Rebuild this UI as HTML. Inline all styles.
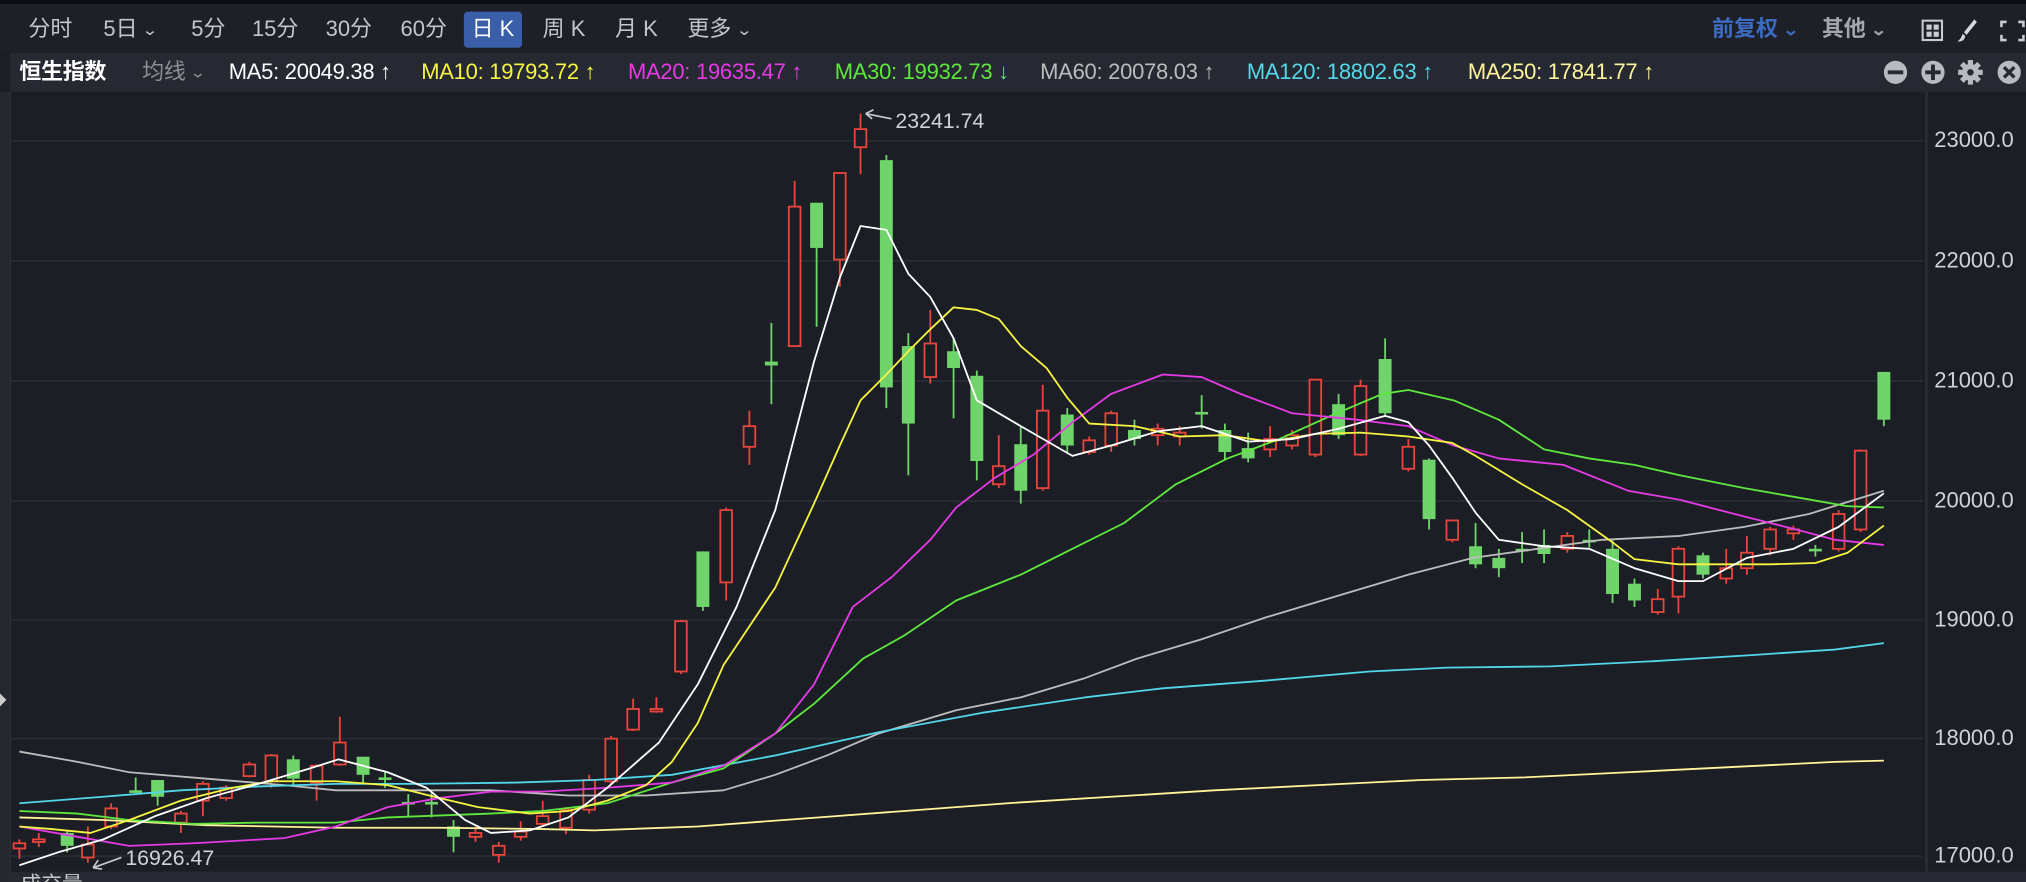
<!DOCTYPE html>
<html><head><meta charset="utf-8">
<style>
html,body{margin:0;padding:0;background:#1c1e26;width:2026px;height:882px;overflow:hidden;}
#w{position:absolute;left:0;top:0;width:1568px;height:683px;transform:scale(1.29209,1.29136);transform-origin:0 0;font-family:"Liberation Sans","Noto Sans CJK SC",sans-serif;background:#1c1e26;}
.top{position:absolute;left:0;top:0;width:1568px;height:41px;background:#1e2028;border-top:3px solid #0e0f12;box-sizing:border-box;}
.t{position:absolute;top:9px;font-size:17px;color:#c4c6cc;line-height:22px;}
.sel{background:#3a5ea8;color:#fff;border-radius:3px;padding:0 6px;top:6px;height:28px;line-height:28px;}
.ma{position:absolute;left:8px;top:41px;width:1560px;height:30px;background:#262932;}
.m{position:absolute;top:5px;font-size:17px;line-height:20px;white-space:nowrap;letter-spacing:-0.2px;}
.lab{position:absolute;left:1497px;font-size:17px;color:#d0d2d8;}
.ar{display:inline-block;font-size:12px;transform:scaleX(1.3);vertical-align:1px;}
</style></head><body>
<div id="w">
<div class="top">
<span class="t" style="left:22px">分时</span>
<span class="t" style="left:80px">5日 <span class="ar">⌄</span></span>
<span class="t" style="left:148px">5分</span>
<span class="t" style="left:195px">15分</span>
<span class="t" style="left:252px">30分</span>
<span class="t" style="left:310px">60分</span>
<span class="t sel" style="left:359px">日 K</span>
<span class="t" style="left:420px">周 K</span>
<span class="t" style="left:476px">月 K</span>
<span class="t" style="left:532px">更多 <span class="ar">⌄</span></span>
<span class="t" style="left:1325px;color:#3d6bc2;font-weight:bold">前复权 <span class="ar">⌄</span></span>
<span class="t" style="left:1410px;color:#a4a6ac;font-weight:bold">其他 <span class="ar">⌄</span></span>
<svg style="position:absolute;left:1486px;top:10px" width="82" height="22" viewBox="0 0 82 22">
<rect x="2" y="3" width="15" height="15" fill="none" stroke="#c9cbd0" stroke-width="1.6"/><rect x="5" y="6" width="4" height="4" fill="#c9cbd0"/><rect x="10.5" y="6" width="4" height="4" fill="#c9cbd0"/><rect x="5" y="11.5" width="4" height="4" fill="#c9cbd0"/><rect x="10.5" y="11.5" width="4" height="4" fill="#c9cbd0"/>
<path d="M42 2 L44 4 L36 14 L34 12 Z M33 13 L35 15 Q34 20 29 19 Q32 17 33 13Z" fill="#d8d8dc"/>
<path d="M62 3h5v2h-3v3h-2zM76 3h5v5h-2v-3h-3zM62 14h2v3h3v2h-5zM79 14h2v5h-5v-2h3z" fill="#c9cbd0"/>
</svg>
</div>
<div class="ma">
<span class="m" style="left:7px;color:#fff;font-weight:bold;font-size:17px">恒生指数</span>
<span class="m" style="left:102px;color:#8e9097">均线 <span class="ar">⌄</span></span>
<span class="m" style="left:169px;color:#fff">MA5: 20049.38 ↑</span>
<span class="m" style="left:318px;color:#f5f542">MA10: 19793.72 ↑</span>
<span class="m" style="left:478px;color:#e53ae5">MA20: 19635.47 ↑</span>
<span class="m" style="left:638px;color:#5ee83e">MA30: 19932.73 ↓</span>
<span class="m" style="left:797px;color:#bcbcbc">MA60: 20078.03 ↑</span>
<span class="m" style="left:957px;color:#56d8ea">MA120: 18802.63 ↑</span>
<span class="m" style="left:1128px;color:#fff59a">MA250: 17841.77 ↑</span>
<svg style="position:absolute;left:1448px;top:4px" width="112" height="22" viewBox="0 0 112 22">
<circle cx="11" cy="11" r="9" fill="#b8babf"/><rect x="5" y="9.5" width="12" height="3" fill="#262932"/>
<circle cx="40" cy="11" r="9" fill="#b8babf"/><rect x="34" y="9.5" width="12" height="3" fill="#262932"/><rect x="38.5" y="5" width="3" height="12" fill="#262932"/>
<g transform="translate(69,11)" fill="#b8babf"><circle r="6.5"/><rect x="-2" y="-9.5" width="4" height="19"/><rect x="-2" y="-9.5" width="4" height="19" transform="rotate(45)"/><rect x="-2" y="-9.5" width="4" height="19" transform="rotate(90)"/><rect x="-2" y="-9.5" width="4" height="19" transform="rotate(135)"/><circle r="2.5" fill="#262932"/></g>
<circle cx="99" cy="11" r="9" fill="#b8babf"/><path d="M95 7l8 8M103 7l-8 8" stroke="#262932" stroke-width="2.6"/>
</svg>
</div>
<svg id="ch" style="position:absolute;left:0;top:71px" width="1568" height="612" viewBox="0 71 1568 612">
<rect x="0" y="71" width="8" height="612" fill="#25272e"/>
<line x1="8" y1="71" x2="8" y2="683" stroke="#2e3038"/>
<line x1="1491" y1="71" x2="1491" y2="683" stroke="#2f323a" stroke-width="1.5"/>
<g stroke="#292c34" stroke-width="1.4">
<line x1="8" x2="1488" y1="109" y2="109"/><line x1="8" x2="1488" y1="202" y2="202"/><line x1="8" x2="1488" y1="295" y2="295"/><line x1="8" x2="1488" y1="388" y2="388"/><line x1="8" x2="1488" y1="480" y2="480"/><line x1="8" x2="1488" y1="572" y2="572"/><line x1="8" x2="1488" y1="663" y2="663"/>
</g>
<g id="cd"></g>
<g fill="none" stroke-width="1.4" stroke-linejoin="round">
<polyline stroke="#bdbdbd" points="15,582 60,590 100,598 160,603 220,608 260,612 320,612 380,612 440,616 500,616 560,612 600,600 640,585 680,568 740,550 790,540 840,525 880,510 930,495 980,478 1040,460 1090,445 1140,432 1190,425 1240,418 1300,415 1350,408 1400,398 1458,380"/>
<polyline stroke="#52d6ea" points="15,622 80,617 140,612 200,609 260,607 320,607 400,606 460,604 520,600 600,585 680,567 760,552 840,540 900,533 980,527 1060,520 1120,517 1200,516 1280,512 1360,507 1420,503 1458,498"/>
<polyline stroke="#fff59a" points="15,633 80,635 160,639 260,641 340,641 420,642 460,643 540,640 620,634 700,628 780,622 860,617 940,612 1020,608 1100,604 1180,602 1260,598 1340,594 1420,590 1458,589"/>
<polyline stroke="#5ee83e" points="15,628 60,630 100,635 150,638 200,637 260,637 300,633 380,630 420,628 470,622 520,606 560,595 600,568 630,545 668,510 700,492 740,465 790,445 830,425 870,405 910,375 950,355 990,340 1030,322 1070,305 1090,302 1125,310 1160,325 1195,348 1230,355 1265,360 1300,368 1350,378 1390,385 1430,392 1458,393"/>
<polyline stroke="#e53ae5" points="15,640 60,648 100,655 150,653 220,649 260,640 300,625 340,618 380,613 420,613 470,610 520,606 560,593 600,568 630,530 660,470 690,447 720,418 740,393 770,370 800,352 830,327 860,305 900,290 930,292 960,305 1000,320 1050,325 1090,330 1125,345 1160,355 1210,360 1260,380 1300,387 1350,400 1390,410 1420,418 1458,422"/>
<polyline stroke="#f5f542" points="15,640 40,642 70,645 100,635 140,620 180,610 210,605 260,605 300,608 340,618 370,625 410,630 440,628 470,620 500,608 520,590 540,560 560,515 600,455 630,390 650,345 666,310 686,290 703,272 720,255 738,238 756,240 773,247 790,268 810,285 826,308 843,328 878,330 913,338 948,337 983,342 1018,336 1053,335 1090,338 1124,343 1142,353 1178,375 1213,395 1248,420 1265,433 1299,437 1336,437 1370,437 1405,436 1430,428 1458,407"/>
<polyline stroke="#ffffff" points="15,670 45,660 80,650 120,632 160,618 200,607 240,595 262,588 300,598 330,610 360,635 380,645 410,643 440,633 470,610 510,575 540,530 570,470 600,395 630,280 650,215 666,175 686,178 703,212 720,230 738,262 756,310 790,330 830,353 860,345 896,334 930,330 966,342 1000,340 1036,332 1072,322 1090,327 1106,345 1124,370 1142,397 1160,418 1195,423 1230,425 1265,440 1299,450 1318,450 1352,432 1388,425 1423,408 1458,382"/>
</g>
<path d="M670 88 L690 92 M670 88 l6 -3 M670 88 l5 4" stroke="#c8c8cc" stroke-width="1.3" fill="none"/>
<text x="693" y="99" fill="#d0d2d8" font-size="16.5" font-family="Liberation Sans,sans-serif">23241.74</text>
<path d="M72 672 L94 664 M72 672 l4 -6 M72 672 l7 1" stroke="#c8c8cc" stroke-width="1.3" fill="none"/>
<text x="97" y="670" fill="#d0d2d8" font-size="16.5" font-family="Liberation Sans,sans-serif">16926.47</text>
<rect x="8" y="675" width="1560" height="8" fill="#262932"/>
<text x="16" y="690" fill="#ccc" font-size="16" font-family="Liberation Sans,Noto Sans CJK SC,sans-serif">成交量</text>
</svg>
<div class="lab" style="top:99px">23000.0</div>
<div class="lab" style="top:192px">22000.0</div>
<div class="lab" style="top:285px">21000.0</div>
<div class="lab" style="top:378px">20000.0</div>
<div class="lab" style="top:470px">19000.0</div>
<div class="lab" style="top:562px">18000.0</div>
<div class="lab" style="top:653px">17000.0</div>
<svg style="position:absolute;left:0;top:535px" width="6" height="14"><path d="M0 2 L5 7 L0 12" fill="#ccc"/></svg>
</div>
<script>
var C=[
[15,'r',653,657,650,665],[30,'r',650,652,645,656],[52,'g',645,655,643,660],[68,'r',654,664,640,668],[86,'r',626,640,622,642],
[105,'g',612,614,602,614],[122,'g',604,617,604,624],[140,'r',630,637,628,645],[157,'r',607,620,605,632],[175,'r',610,618,608,620],
[193,'r',592,601,590,602],[210,'r',585,605,584,610],[227,'g',588,603,585,608],[245,'r',593,606,592,620],[263,'r',575,592,555,593],
[281,'g',586,600,586,606],[298,'g',602,604,598,610],[316,'g',621,623,615,632],[334,'g',621,623,613,633],[351,'g',640,648,635,660],
[368,'r',645,648,640,652],[386,'r',655,662,652,668],[403,'r',644,648,636,651],[420,'r',632,638,620,640],[438,'r',627,641,625,646],
[456,'r',604,627,600,630],[473,'r',572,605,570,608],[490,'r',549,565,541,566],[508,'r',549,551,540,552],[527,'r',481,520,480,522],
[544,'g',427,470,427,473],[562,'r',395,451,393,465],[580,'r',330,346,318,360],[597,'g',280,283,250,313],[615,'r',160,268,140,268],
[632,'g',157,192,157,253],[650,'r',134,201,134,222],[666,'r',100,114,88,135],[686,'g',124,300,120,316],[703,'g',268,328,258,368],
[720,'r',266,292,240,297],[738,'g',272,285,262,324],[756,'g',291,357,287,372],[773,'r',361,375,337,378],[790,'g',344,380,330,390],
[807,'r',318,378,298,380],[826,'g',321,345,316,350],[843,'r',341,350,338,352],[860,'r',320,345,318,350],[878,'g',333,340,325,345],
[896,'r',332,337,328,345],[913,'r',335,338,330,345],[930,'g',319,321,306,332],[948,'g',333,350,328,356],[966,'g',347,355,335,358],
[983,'r',340,348,330,354],[1000,'r',337,345,333,348],[1018,'r',294,352,294,354],[1036,'g',313,337,305,340],[1053,'r',299,352,294,353],
[1072,'g',278,320,262,322],[1090,'r',346,363,340,365],[1106,'g',356,402,355,410],[1124,'r',403,418,403,420],[1142,'g',423,437,405,440],
[1160,'g',432,440,425,447],[1178,'g',425,427,412,436],[1195,'g',422,429,410,436],[1213,'r',415,425,412,428],[1230,'g',418,420,410,424],
[1248,'g',425,460,418,467],[1265,'g',452,465,448,470],[1283,'r',464,474,456,476],[1299,'r',425,462,423,475],[1318,'g',430,445,428,448],
[1336,'r',440,448,425,452],[1352,'r',428,440,415,445],[1370,'r',410,425,408,430],[1388,'r',410,413,407,418],[1405,'g',425,427,422,431],
[1423,'r',398,425,395,427],[1440,'r',349,410,348,412],[1458,'g',288,325,288,330]];
var s='';
C.forEach(function(c){var x=c[0],red=c[1]=='r',col=red?'#e8453c':'#6fd46a';
if(red){s+='<line x1="'+x+'" x2="'+x+'" y1="'+c[4]+'" y2="'+c[2]+'" stroke="'+col+'" stroke-width="1.4"/><line x1="'+x+'" x2="'+x+'" y1="'+c[3]+'" y2="'+c[5]+'" stroke="'+col+'" stroke-width="1.4"/>';
var h=Math.max(c[3]-c[2],1.5);s+='<rect x="'+(x-4.5)+'" y="'+c[2]+'" width="9" height="'+h+'" fill="#1c1e26" stroke="'+col+'" stroke-width="1.4"/>';}
else{s+='<line x1="'+x+'" x2="'+x+'" y1="'+c[4]+'" y2="'+c[5]+'" stroke="'+col+'" stroke-width="1.4"/>';
var h=Math.max(c[3]-c[2],2);s+='<rect x="'+(x-5)+'" y="'+c[2]+'" width="10" height="'+h+'" fill="'+col+'"/>';}
});
document.getElementById('cd').innerHTML=s;
</script>
</body></html>
